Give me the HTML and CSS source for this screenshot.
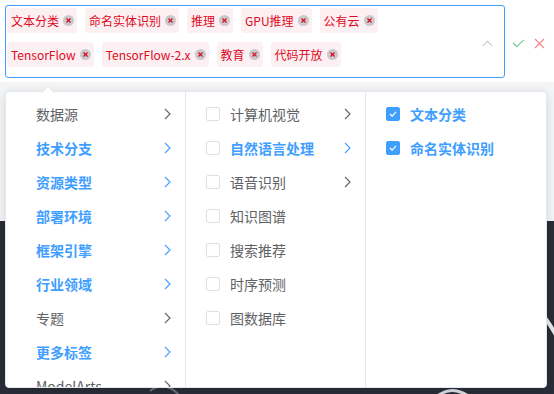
FILE: index.html
```html
<!DOCTYPE html>
<html lang="zh-CN">
<head>
  <meta charset="UTF-8">
  <meta name="viewport" content="width=device-width, initial-scale=1.0">
  <title>标签选择</title>
  <link rel="stylesheet" href="styles.css">
</head>
<body>

  <div class="page">
    <div class="header">
      <div class="select-box">
        <div class="tags">
          <span class="tag">文本分类<svg class="tag-close" viewBox="0 0 12 12"><circle cx="6" cy="6" r="6" fill="#c8c9cc"/><path d="M3.8 3.8l4.4 4.4M8.2 3.8l-4.4 4.4" stroke="#dd0a1e" stroke-width="1.3"/></svg></span>
          <span class="tag">命名实体识别<svg class="tag-close" viewBox="0 0 12 12"><circle cx="6" cy="6" r="6" fill="#c8c9cc"/><path d="M3.8 3.8l4.4 4.4M8.2 3.8l-4.4 4.4" stroke="#dd0a1e" stroke-width="1.3"/></svg></span>
          <span class="tag">推理<svg class="tag-close" viewBox="0 0 12 12"><circle cx="6" cy="6" r="6" fill="#c8c9cc"/><path d="M3.8 3.8l4.4 4.4M8.2 3.8l-4.4 4.4" stroke="#dd0a1e" stroke-width="1.3"/></svg></span>
          <span class="tag">GPU推理<svg class="tag-close" viewBox="0 0 12 12"><circle cx="6" cy="6" r="6" fill="#c8c9cc"/><path d="M3.8 3.8l4.4 4.4M8.2 3.8l-4.4 4.4" stroke="#dd0a1e" stroke-width="1.3"/></svg></span>
          <span class="tag">公有云<svg class="tag-close" viewBox="0 0 12 12"><circle cx="6" cy="6" r="6" fill="#c8c9cc"/><path d="M3.8 3.8l4.4 4.4M8.2 3.8l-4.4 4.4" stroke="#dd0a1e" stroke-width="1.3"/></svg></span>
          <span class="tag">TensorFlow<svg class="tag-close" viewBox="0 0 12 12"><circle cx="6" cy="6" r="6" fill="#c8c9cc"/><path d="M3.8 3.8l4.4 4.4M8.2 3.8l-4.4 4.4" stroke="#dd0a1e" stroke-width="1.3"/></svg></span>
          <span class="tag">TensorFlow-2.x<svg class="tag-close" viewBox="0 0 12 12"><circle cx="6" cy="6" r="6" fill="#c8c9cc"/><path d="M3.8 3.8l4.4 4.4M8.2 3.8l-4.4 4.4" stroke="#dd0a1e" stroke-width="1.3"/></svg></span>
          <span class="tag">教育<svg class="tag-close" viewBox="0 0 12 12"><circle cx="6" cy="6" r="6" fill="#c8c9cc"/><path d="M3.8 3.8l4.4 4.4M8.2 3.8l-4.4 4.4" stroke="#dd0a1e" stroke-width="1.3"/></svg></span>
          <span class="tag">代码开放<svg class="tag-close" viewBox="0 0 12 12"><circle cx="6" cy="6" r="6" fill="#c8c9cc"/><path d="M3.8 3.8l4.4 4.4M8.2 3.8l-4.4 4.4" stroke="#dd0a1e" stroke-width="1.3"/></svg></span>
        </div>
        <svg class="arrow-up" viewBox="0 0 12 7"><polyline points="1,6 6,1 11,6" fill="none" stroke="#c0c4cc" stroke-width="1.2"/></svg>
      </div>
      <div class="actions">
        <svg class="icon-ok" viewBox="0 0 14 10"><polyline points="1,4.5 5,8.5 13,1" fill="none" stroke="#7cc99c" stroke-width="1.4"/></svg>
        <svg class="icon-cancel" viewBox="0 0 11 11"><path d="M1 1l9 9M10 1l-9 9" fill="none" stroke="#f78989" stroke-width="1.3"/></svg>
      </div>
    </div>

    <div class="band"></div>

    <div class="banner">
      <svg class="streaks" viewBox="0 0 554 173" preserveAspectRatio="none">
        <path d="M520 70 C 540 85, 555 110, 570 140" fill="none" stroke="#e8e9ec" stroke-width="4"/>
        <path d="M430 180 C 445 168, 455 166, 470 176" fill="none" stroke="#d8dade" stroke-width="3"/>
        <path d="M150 170 C 160 162, 170 164, 180 175" fill="none" stroke="#6b6f78" stroke-width="2"/>
      </svg>
    </div>

    <!-- cascader popper -->
    <div class="dropdown">
      <div class="col">
        <div class="item"><span class="label">数据源</span><svg class="chevron" viewBox="0 0 7 12"><polyline points="1,1 6,6 1,11"/></svg></div>
        <div class="item active"><span class="label">技术分支</span><svg class="chevron" viewBox="0 0 7 12"><polyline points="1,1 6,6 1,11"/></svg></div>
        <div class="item active"><span class="label">资源类型</span><svg class="chevron" viewBox="0 0 7 12"><polyline points="1,1 6,6 1,11"/></svg></div>
        <div class="item active"><span class="label">部署环境</span><svg class="chevron" viewBox="0 0 7 12"><polyline points="1,1 6,6 1,11"/></svg></div>
        <div class="item active"><span class="label">框架引擎</span><svg class="chevron" viewBox="0 0 7 12"><polyline points="1,1 6,6 1,11"/></svg></div>
        <div class="item active"><span class="label">行业领域</span><svg class="chevron" viewBox="0 0 7 12"><polyline points="1,1 6,6 1,11"/></svg></div>
        <div class="item"><span class="label">专题</span><svg class="chevron" viewBox="0 0 7 12"><polyline points="1,1 6,6 1,11"/></svg></div>
        <div class="item active"><span class="label">更多标签</span><svg class="chevron" viewBox="0 0 7 12"><polyline points="1,1 6,6 1,11"/></svg></div>
        <div class="item"><span class="label">ModelArts</span><svg class="chevron" viewBox="0 0 7 12"><polyline points="1,1 6,6 1,11"/></svg></div>
      </div>

      <div class="col col-check">
        <div class="item"><span class="checkbox"></span><span class="label">计算机视觉</span><svg class="chevron" viewBox="0 0 7 12"><polyline points="1,1 6,6 1,11"/></svg></div>
        <div class="item active"><span class="checkbox"></span><span class="label">自然语言处理</span><svg class="chevron" viewBox="0 0 7 12"><polyline points="1,1 6,6 1,11"/></svg></div>
        <div class="item"><span class="checkbox"></span><span class="label">语音识别</span><svg class="chevron" viewBox="0 0 7 12"><polyline points="1,1 6,6 1,11"/></svg></div>
        <div class="item"><span class="checkbox"></span><span class="label">知识图谱</span></div>
        <div class="item"><span class="checkbox"></span><span class="label">搜索推荐</span></div>
        <div class="item"><span class="checkbox"></span><span class="label">时序预测</span></div>
        <div class="item"><span class="checkbox"></span><span class="label">图数据库</span></div>
      </div>

      <div class="col col-check">
        <div class="item active"><span class="checkbox checked"><svg viewBox="0 0 14 14"><polyline points="3.5,7 6,9.5 10.5,4.5" fill="none" stroke="#fff" stroke-width="1.3"/></svg></span><span class="label">文本分类</span></div>
        <div class="item active"><span class="checkbox checked"><svg viewBox="0 0 14 14"><polyline points="3.5,7 6,9.5 10.5,4.5" fill="none" stroke="#fff" stroke-width="1.3"/></svg></span><span class="label">命名实体识别</span></div>
      </div>
    </div>
  </div>

</body>
</html>
```

FILE: styles.css
```css
body {
  margin: 0;
  font-family: "Noto Sans CJK SC", "Noto Sans", sans-serif;
  background-color: #fff;
}

.page {
  position: relative;
  width: 554px;
  height: 394px;
  overflow: hidden;
}

.header {
  display: flex;
  align-items: flex-start;
  height: 82px;
  padding: 5px 0 0 5px;
  box-sizing: border-box;
  background-color: #fff;
}

.select-box {
  display: flex;
  justify-content: space-between;
  align-items: center;
  width: 500px;
  height: 73px;
  box-sizing: border-box;
  padding: 2px 11px 0 1px;
  border: 1px solid #409eff;
  border-radius: 3px;
}

.tags {
  display: flex;
  flex-wrap: wrap;
  gap: 9px 8px;
  width: 420px;
  align-self: flex-start;
}

.tag {
  display: inline-flex;
  align-items: center;
  height: 25px;
  padding: 0 3px 0 4px;
  background-color: #fdf0f2;
  color: #dd0a1e;
  font-size: 12px;
  border-radius: 3px;
}

.tag-close {
  width: 11px;
  height: 11px;
  margin-left: 4px;
}

.arrow-up {
  width: 11px;
  height: 7px;
  margin-top: 2px;
}

.actions {
  display: flex;
  align-items: center;
  gap: 9px;
  margin: 33px 0 0 7px;
}

.icon-ok {
  width: 13px;
  height: 9px;
}

.icon-cancel {
  width: 11px;
  height: 11px;
}

.band {
  height: 139px;
  background-color: #f4f5f7;
}

.banner {
  position: relative;
  height: 173px;
  background-color: #292d38;
}

.streaks {
  position: absolute;
  top: 0;
  left: 0;
  width: 100%;
  height: 100%;
}

.dropdown {
  position: absolute;
  top: 91px;
  left: 5px;
  display: flex;
  width: 542px;
  height: 297px;
  box-sizing: border-box;
  background-color: #fff;
  border: 1px solid #e4e7ed;
  border-radius: 4px;
  box-shadow: 0 2px 12px rgba(0, 0, 0, 0.12);
}

/* popper arrow */
.dropdown::before,
.dropdown::after {
  content: "";
  position: absolute;
  left: 36px;
  border: 6px solid transparent;
  border-top: 0;
}

.dropdown::before {
  top: -6px;
  border-bottom-color: #e4e7ed;
}

.dropdown::after {
  top: -5px;
  border-bottom-color: #fff;
}

.col {
  width: 180px;
  height: 100%;
  box-sizing: border-box;
  padding-top: 5px;
  border-right: 1px solid #e4e7ed;
  overflow: hidden;
}

.col:last-child {
  border-right: none;
}

.item {
  display: flex;
  align-items: center;
  height: 34px;
  padding: 0 14px 0 30px;
  font-size: 14px;
  color: #606266;
}

.col-check .item {
  padding-left: 20px;
}

.item .label {
  flex: 1;
  white-space: nowrap;
}

.item.active {
  color: #409eff;
  font-weight: bold;
}

.chevron {
  width: 7px;
  height: 12px;
  fill: none;
  stroke: currentColor;
  stroke-width: 1.1;
}

.checkbox {
  display: inline-block;
  width: 14px;
  height: 14px;
  box-sizing: border-box;
  margin-right: 10px;
  border: 1px solid #dcdfe6;
  border-radius: 2px;
  background-color: #fff;
}

.checkbox.checked {
  background-color: #409eff;
  border-color: #409eff;
}

.checkbox svg {
  display: block;
  width: 12px;
  height: 12px;
}
```
